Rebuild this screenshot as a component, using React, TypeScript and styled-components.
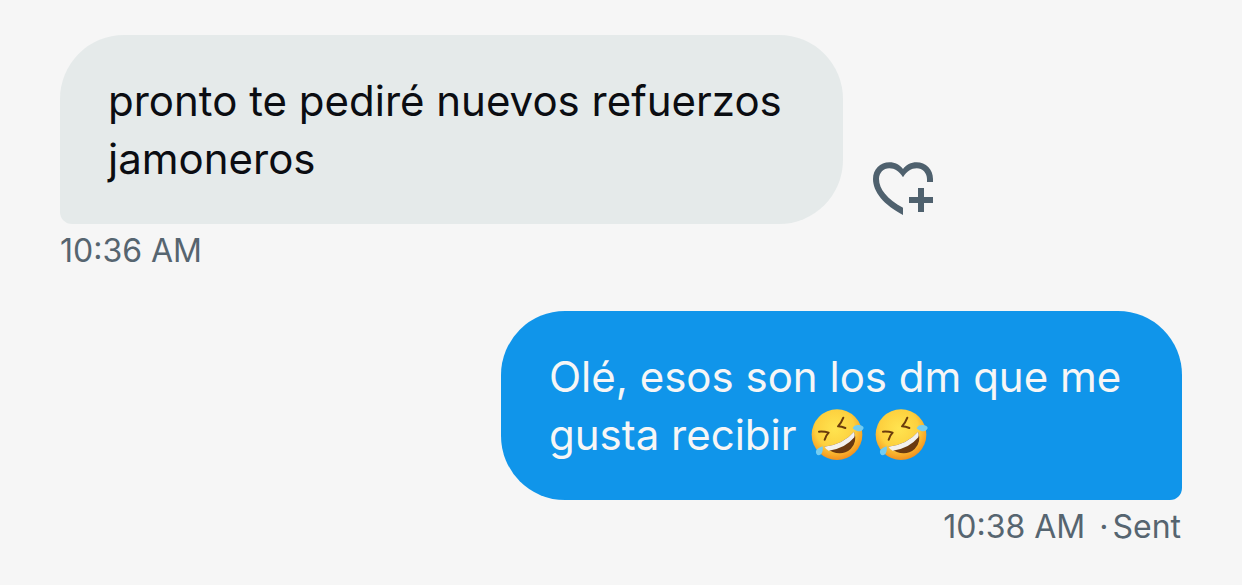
import React from "react";
import styled, { createGlobalStyle } from "styled-components";

const GlobalStyle = createGlobalStyle`
  * { box-sizing: border-box; }
  body { margin: 0; background: #f6f6f6; }
  p { margin: 0; }
`;

const Conversation = styled.main`
  display: flex;
  flex-direction: column;
  gap: 39px;
  padding: 35px 60px;
  font-family: Inter, "Liberation Sans", sans-serif;
`;

const Message = styled.article<{ $sent?: boolean }>`
  display: flex;
  flex-direction: column;
  align-items: ${(p) => (p.$sent ? "flex-end" : "flex-start")};
`;

const BubbleRow = styled.div`
  display: flex;
  align-items: flex-end;
  gap: 30px;
`;

const Bubble = styled.p<{ $sent?: boolean; $maxWidth: number }>`
  max-width: ${(p) => p.$maxWidth}px;
  padding: 37px 48px 36px;
  border-radius: ${(p) => (p.$sent ? "64px 64px 12px 64px" : "64px 64px 64px 12px")};
  background: ${(p) => (p.$sent ? "#1095ea" : "#e5eaea")};
  color: ${(p) => (p.$sent ? "#f6f6f6" : "#0b0d12")};
  font-size: 42px;
  line-height: 58px;
`;

const Meta = styled.div`
  display: flex;
  padding: 6px 1px 0 0;
  color: #566570;
  font-size: 32px;
  line-height: 42px;
`;

const Separator = styled.span`
  margin: 0 4px 0 14px;
`;

const ReactButton = styled.button`
  display: block;
  margin: 0 0 8px;
  padding: 0;
  border: 0;
  background: none;
  color: #4f616e;
  cursor: pointer;

  svg { display: block; }
`;

const EmojiIcon = styled.svg`
  width: 60px;
  height: 60px;
  margin: -4px 3px -4px 1px;
  vertical-align: -9px;
`;

function HeartPlus() {
  return (
    <svg width="60" height="54" viewBox="0 0 60 54" fill="currentColor" aria-hidden="true">
      <path d="M30 7C33 3 38 .3 43.500 .3C53 .3 60 7.500 60 17V20H54V17C54 11 49.500 6.300 43.800 6.300C38 6.300 34 9 30 15.300C26 9 22 6.300 16.200 6.300C10.500 6.300 6 11 6 17C6 27 14 37 30 45.800V53C11 43 0 30 0 17C0 7.500 7 .3 16.500 .3C22 .3 27 3 30 7Z" />
      <path d="M45 26H51V35H60V41H51V50H45V41H36V35H45Z" />
    </svg>
  );
}

function RollingLaugh({ id }: { id: string }) {
  return (
    <EmojiIcon viewBox="0 0 180 180" role="img" aria-label="Rolling on the floor laughing">
      <defs>
        <radialGradient id={id} cx="0.46" cy="0.38" r="0.64">
          <stop offset="0" stopColor="#ffe450" />
          <stop offset="0.6" stopColor="#fdd03e" />
          <stop offset="0.82" stopColor="#f8ab2a" />
          <stop offset="1" stopColor="#ef8a1c" />
        </radialGradient>
      </defs>
      <circle cx="84" cy="95" r="76" fill={`url(#${id})`} />
      <g fill="none" stroke="#6b3c0c" strokeWidth="6" strokeLinecap="round" strokeLinejoin="round">
        <path d="M30 86Q46 85 59 89Q50 98 47 110" />
        <path d="M103 44Q97 60 87 70Q98 70 109 75" />
      </g>
      <path d="M46 131Q103 124 135 86Q146 116 125 138Q91 167 46 131Z" fill="#6b3a10" />
      <path d="M46 131Q103 124 135 86Q138 94 136 103Q107 138 59 143Q51 139 46 131Z" fill="#f3f1ee" />
      <path d="M131 76Q135 65 149 66Q163 67 164 75Q160 86 147 85Q138 84 131 76Z" fill="#74cdf1" />
      <path d="M41 130Q43 147 36 154Q27 160 22 152Q18 143 26 137Q33 132 41 130Z" fill="#74cdf1" />
    </EmojiIcon>
  );
}

export default function App() {
  return (
    <>
      <GlobalStyle />
      <Conversation>
        <Message>
          <BubbleRow>
            <Bubble $maxWidth={783}>pronto te pediré nuevos refuerzos jamoneros</Bubble>
            <ReactButton type="button" aria-label="Add reaction">
              <HeartPlus />
            </ReactButton>
          </BubbleRow>
          <Meta>
            <time>10:36 AM</time>
          </Meta>
        </Message>
        <Message $sent>
          <Bubble $sent $maxWidth={681}>
            Olé, esos son los dm que me gusta recibir <RollingLaugh id="laugh-a" />
            <RollingLaugh id="laugh-b" />
          </Bubble>
          <Meta>
            <time>10:38 AM</time>
            <Separator>·</Separator>
            <span>Sent</span>
          </Meta>
        </Message>
      </Conversation>
    </>
  );
}
